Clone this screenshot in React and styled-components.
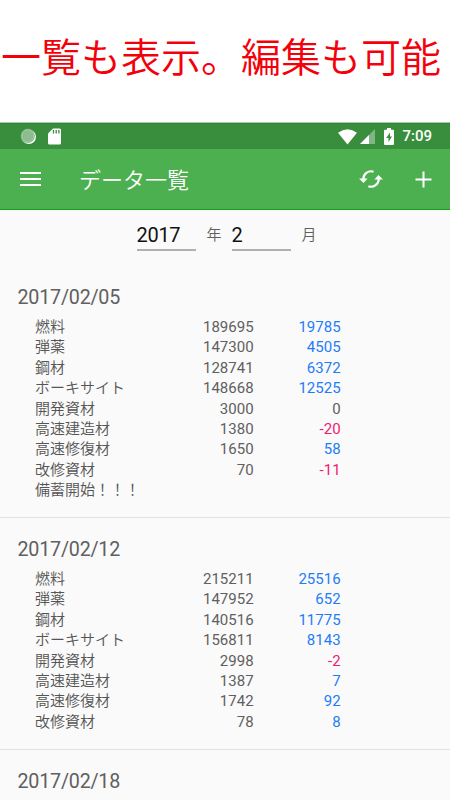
import React from "react";
import styled, { createGlobalStyle } from "styled-components";

const GlobalStyle = createGlobalStyle`
  * { box-sizing: border-box; }
  html, body { margin: 0; padding: 0; background: #fff; }
  body { font-family: Roboto, "Noto Sans CJK JP", sans-serif; overflow: hidden; }
`;

const Screen = styled.div`
  width: 450px;
  height: 800px;
  overflow: hidden;
  display: flex;
  flex-direction: column;
  background: #fff;
`;

const Caption = styled.h1`
  margin: 0;
  height: 123px;
  flex: none;
  padding: 25px 0 0 1px;
  color: #f4000a;
  font: 350 40px/60px "Noto Sans CJK JP", sans-serif;
  white-space: nowrap;
`;

const StatusBar = styled.div`
  height: 26px;
  flex: none;
  display: flex;
  align-items: center;
  justify-content: space-between;
  padding: 0 18px 0 20px;
  background: #388e3c;
  border-top: 1px solid #1f8d24;
  box-shadow: 0 -1px 0 #b5c7b6;
`;

const StatusGroup = styled.div`
  display: flex;
  align-items: center;
`;

const StatusIcon = styled.svg`
  display: block;
  flex: none;
  margin-left: ${(p) => p.$gap || 0}px;
`;

const Clock = styled.span`
  margin-left: 8px;
  color: #fff;
  font-size: 15px;
  line-height: 25px;
  font-weight: 500;
`;

const Toolbar = styled.header`
  height: 61px;
  flex: none;
  display: flex;
  align-items: center;
  padding: 0 18px 0 20px;
  background: #4caf50;
  border-bottom: 1px solid #10a216;
  color: #fff;
`;

const Title = styled.h2`
  flex: 1;
  margin: -3px 0 0 37px;
  font: 350 22px/30px "Noto Sans CJK JP", sans-serif;
`;

const IconButton = styled.button`
  display: flex;
  padding: 0;
  border: 0;
  background: none;
  color: inherit;
  margin-left: ${(p) => p.$gap || 0}px;
`;

const Content = styled.main`
  flex: 1;
  min-height: 0;
  overflow: hidden;
  background: #fafafa;
  color: #606060;
`;

const MonthPicker = styled.div`
  height: 56px;
  display: flex;
  padding: 10px 0 0 136.5px;
`;

const Field = styled.div`
  width: 59px;
  height: 31px;
  border-bottom: 2px solid #b0b0b0;
  color: #111;
  font-size: 20px;
  letter-spacing: -0.3px;
  line-height: 31px;
`;

const Unit = styled.span`
  width: ${(p) => p.$width}px;
  padding-left: 11px;
  font: 350 15px/28px "Noto Sans CJK JP", sans-serif;
  color: #606060;
`;

const Entry = styled.section`
  height: ${(p) => p.$height}px;
  padding-top: 19px;
  border-bottom: 1px solid #e2e2e2;
`;

const EntryDate = styled.h3`
  margin: 0 0 6px 17.5px;
  font-size: 19.7px;
  letter-spacing: -0.22px;
  font-weight: 400;
  line-height: 26px;
`;

const Row = styled.div`
  display: grid;
  grid-template-columns: 125px 93.6px 87px;
  height: 20.4px;
  margin-left: 35px;
  font-size: 15px;
  line-height: 20.4px;
`;

const Label = styled.span`
  font-family: "Noto Sans CJK JP", sans-serif;
  font-weight: 350;
  color: #555;
  line-height: 18.4px;
  white-space: nowrap;
`;

const Amount = styled.span`
  text-align: right;
`;

const Change = styled(Amount)`
  color: ${(p) => (p.$value > 0 ? "#1f7cf8" : p.$value < 0 ? "#f01a70" : "inherit")};
`;

const entries = [
  {
    date: "2017/02/05",
    height: 252,
    rows: [
      ["燃料", 189695, 19785],
      ["弾薬", 147300, 4505],
      ["鋼材", 128741, 6372],
      ["ボーキサイト", 148668, 12525],
      ["開発資材", 3000, 0],
      ["高速建造材", 1380, -20],
      ["高速修復材", 1650, 58],
      ["改修資材", 70, -11],
    ],
    note: "備蓄開始！！！",
  },
  {
    date: "2017/02/12",
    height: 232,
    rows: [
      ["燃料", 215211, 25516],
      ["弾薬", 147952, 652],
      ["鋼材", 140516, 11775],
      ["ボーキサイト", 156811, 8143],
      ["開発資材", 2998, -2],
      ["高速建造材", 1387, 7],
      ["高速修復材", 1742, 92],
      ["改修資材", 78, 8],
    ],
  },
  { date: "2017/02/18", height: 232, rows: [] },
];

export default function App() {
  return (
    <>
      <GlobalStyle />
      <Screen>
        <Caption>一覧も表示。編集も可能</Caption>
        <StatusBar>
          <StatusGroup>
            <StatusIcon width="17" height="17" viewBox="0 0 17 17">
              <circle cx="8.8" cy="8.8" r="7.2" fill="#fff" />
              <circle cx="7.8" cy="7.9" r="7.1" fill="#8dbc8f" />
              <circle cx="7.8" cy="7.9" r="5.8" fill="none" stroke="#b3d2b4" strokeDasharray="1 1" />
            </StatusIcon>
            <StatusIcon $gap={11} width="14" height="17" viewBox="0 0 14 17">
              <path d="M5 .5h6.5Q13 .5 13 2v13q0 1.5-1.5 1.5h-10Q0 16.500 0 15V5.500z" fill="#fff" />
              <path d="M5.500 2v3.500M8.200 2v3.500M10.900 2v3.500" stroke="#388e3c" strokeWidth="1.300" />
            </StatusIcon>
          </StatusGroup>
          <StatusGroup>
            <StatusIcon width="19" height="16" viewBox="0 0 19 16">
              <path d="M0 3.700Q9.500-3.300 19 3.700L9.500 15.600z" fill="#fff" />
            </StatusIcon>
            <StatusIcon $gap={3} width="15" height="15" viewBox="0 0 15 15">
              <path d="M15 0v15H0z" fill="#80b683" />
              <path d="M9 6v9H0z" fill="#fff" />
            </StatusIcon>
            <StatusIcon $gap={9} width="10" height="17" viewBox="0 0 10 17">
              <path d="M3 0h4v1.800h2q1 0 1 1V16q0 1-1 1H1q-1 0-1-1V2.800q0-1 1-1h2z" fill="#fff" />
              <path d="M6 4.500L2.200 10h2.300v4L8 8.500H6z" fill="#388e3c" />
            </StatusIcon>
            <Clock>7:09</Clock>
          </StatusGroup>
        </StatusBar>
        <Toolbar>
          <IconButton aria-label="menu">
            <svg width="22" height="16" viewBox="0 0 22 16">
              <path d="M0 2h21M0 8h21M0 14h21" stroke="currentColor" strokeWidth="2" />
            </svg>
          </IconButton>
          <Title>データ一覧</Title>
          <IconButton aria-label="refresh">
            <svg width="24" height="20" viewBox="0 0 24 20" fill="none" stroke="currentColor" strokeWidth="2.2">
              <path d="M4.300 10.500A7.800 7.800 0 0 1 14.600 2.700M19.700 9.500A7.800 7.800 0 0 1 9.400 17.300" />
              <path d="M0 9.500h8.600L4.500 14zM15.400 10.500H24L19.500 6z" fill="currentColor" stroke="none" />
            </svg>
          </IconButton>
          <IconButton $gap={32} aria-label="add">
            <svg width="17" height="17" viewBox="0 0 17 17">
              <path d="M8.500 .5v16M.5 8.500h16" stroke="currentColor" strokeWidth="2" />
            </svg>
          </IconButton>
        </Toolbar>
        <Content>
          <MonthPicker>
            <Field>2017</Field>
            <Unit $width={36}>年</Unit>
            <Field>2</Field>
            <Unit $width={36}>月</Unit>
          </MonthPicker>
          {entries.map((entry) => (
            <Entry key={entry.date} $height={entry.height}>
              <EntryDate>{entry.date}</EntryDate>
              {entry.rows.map(([label, amount, change]) => (
                <Row key={label}>
                  <Label>{label}</Label>
                  <Amount>{amount}</Amount>
                  <Change $value={change}>{change}</Change>
                </Row>
              ))}
              {entry.note && (
                <Row>
                  <Label>{entry.note}</Label>
                </Row>
              )}
            </Entry>
          ))}
        </Content>
      </Screen>
    </>
  );
}
